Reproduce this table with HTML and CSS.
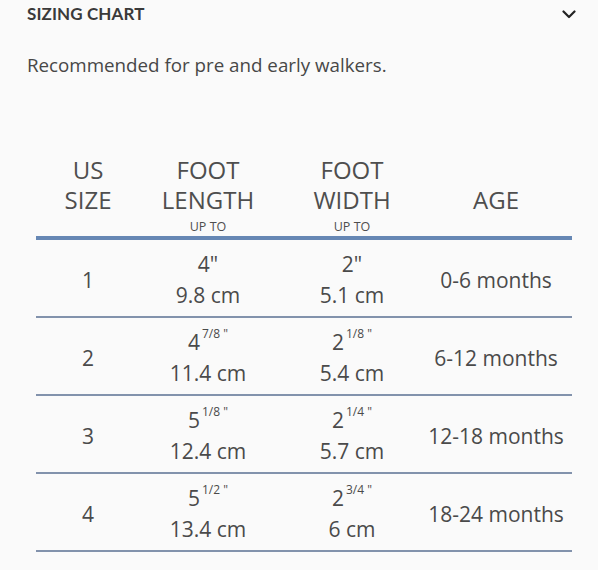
FILE: index.html
```html
<!DOCTYPE html>
<html lang="en">
<head>
<meta charset="utf-8">
<title>Sizing chart</title>
<link rel="stylesheet" href="styles.css">
</head>
<body>
<section class="panel">
  <header class="panel-head">
    <h2 class="panel-title">SIZING CHART</h2>
    <svg class="chevron" width="14" height="9" viewBox="0 0 14 9" aria-hidden="true">
      <polyline points="1.5,1.5 7,7 12.5,1.5" fill="none" stroke="#222" stroke-width="2.2" stroke-linecap="round" stroke-linejoin="round"/>
    </svg>
  </header>
  <p class="intro">Recommended for pre and early walkers.</p>
  <table class="chart">
    <thead>
      <tr>
        <th class="c1"><span class="h-main">US<br>SIZE</span><span class="h-sub">&nbsp;</span></th>
        <th class="c2"><span class="h-main">FOOT<br>LENGTH</span><span class="h-sub">UP TO</span></th>
        <th class="c3"><span class="h-main">FOOT<br>WIDTH</span><span class="h-sub">UP TO</span></th>
        <th class="c4"><span class="h-main">AGE</span><span class="h-sub">&nbsp;</span></th>
      </tr>
    </thead>
    <tbody>
      <tr>
        <td class="c1">1</td>
        <td class="c2">4"<br>9.8 cm</td>
        <td class="c3">2"<br>5.1 cm</td>
        <td class="c4">0-6 months</td>
      </tr>
      <tr>
        <td class="c1">2</td>
        <td class="c2">4<sup>7/8 "</sup><br>11.4 cm</td>
        <td class="c3">2<sup>1/8 "</sup><br>5.4 cm</td>
        <td class="c4">6-12 months</td>
      </tr>
      <tr>
        <td class="c1">3</td>
        <td class="c2">5<sup>1/8 "</sup><br>12.4 cm</td>
        <td class="c3">2<sup>1/4 "</sup><br>5.7 cm</td>
        <td class="c4">12-18 months</td>
      </tr>
      <tr>
        <td class="c1">4</td>
        <td class="c2">5<sup>1/2 "</sup><br>13.4 cm</td>
        <td class="c3">2<sup>3/4 "</sup><br>6 cm</td>
        <td class="c4">18-24 months</td>
      </tr>
    </tbody>
  </table>
</section>
</body>
</html>
```

FILE: styles.css
```css
html, body {
  margin: 0;
  padding: 0;
  background: #fafafa;
}

body {
  font-family: "Open Sans", Lato, "Liberation Sans", sans-serif;
  color: #4a4a4a;
}

.panel {
  padding: 0 0 0 27px;
}

.panel-head {
  display: flex;
  align-items: center;
  justify-content: space-between;
  padding-right: 22px;
  height: 29px;
}

.panel-title {
  margin: 0;
  font-family: Lato, "Open Sans", sans-serif;
  font-size: 17px;
  font-weight: 700;
  color: #3a3a3a;
  letter-spacing: 0.1px;
  line-height: 20px;
  padding-bottom: 2px;
}

.chevron {
  display: block;
}

.intro {
  margin: 24px 0 0 0;
  font-size: 18.75px;
  line-height: 24px;
  color: #474747;
}

.chart {
  margin: 78px 0 0 9px;
  width: 536px;
  border-collapse: collapse;
  table-layout: fixed;
}

.chart .c1 { width: 104px; }
.chart .c2 { width: 136px; }
.chart .c3 { width: 152px; }
.chart .c4 { width: 136px; padding-right: 8px; }

.chart th {
  font-weight: 400;
  vertical-align: bottom;
  text-align: center;
  padding: 0 0 2px 0;
  border-bottom: 4px solid #6687b4;
  color: #4e4e4e;
}

.h-main {
  display: block;
  font-size: 24px;
  line-height: 30px;
}

.h-sub {
  display: block;
  font-size: 12.5px;
  line-height: 16px;
  margin-top: 4px;
  margin-bottom: -1px;
}

.chart td {
  text-align: center;
  vertical-align: middle;
  font-size: 21px;
  line-height: 31px;
  padding: 9px 0 5px 0;
  border-bottom: 2px solid #8292ac;
  color: #4a4a4a;
}

sup {
  font-size: 12px;
  line-height: 0;
  vertical-align: 12px;
  margin-left: 2px;
}
```
